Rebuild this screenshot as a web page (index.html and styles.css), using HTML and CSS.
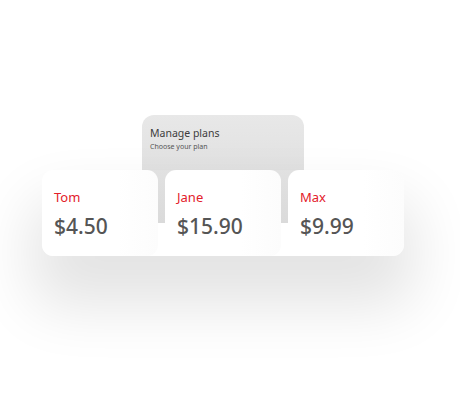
FILE: index.html
```html
<!DOCTYPE html>
<html lang="en">
<head>
    <meta charset="UTF-8">
    <meta name="viewport" content="width=device-width, initial-scale=1.0">
    <title>Manage plans</title>
    <link rel="stylesheet" href="styles.css">
</head>
<body>
    <div class="stage">
        <div class="plans-panel">
            <h3>Manage plans</h3>
            <p>Choose your plan</p>
        </div>
        <div class="plan-row">
            <div class="plan-card">
                <div class="plan-name">Tom</div>
                <div class="plan-price">$4.50</div>
            </div>
            <div class="plan-card">
                <div class="plan-name">Jane</div>
                <div class="plan-price">$15.90</div>
            </div>
            <div class="plan-card">
                <div class="plan-name">Max</div>
                <div class="plan-price">$9.99</div>
            </div>
        </div>
    </div>
</body>
</html>
```

FILE: styles.css
```css
html, body {
    height: 100%;
}
body {
    margin: 0;
    min-height: 400px;
    background: #ffffff;
    font-family: "Noto Sans", Arial, sans-serif;
}
.stage {
    width: 362px;
    margin-left: 42px;
    padding-top: 115px;
}
.plans-panel {
    width: 162px;
    height: 108px;
    margin: 0 auto;
    box-sizing: border-box;
    padding: 11px 8px;
    border-radius: 12px 12px 0 0;
    background: linear-gradient(#e8e8e8, #dadada);
}
.plans-panel h3 {
    margin: 0;
    font-size: 10.5px;
    font-weight: 400;
    color: #3d3d3d;
    line-height: 15px;
}
.plans-panel p {
    margin: 1px 0 0;
    font-size: 7px;
    color: #555;
}
.plan-row {
    display: flex;
    gap: 7px;
    margin-top: -53px;
    border-radius: 12px;
    box-shadow: 0 40px 60px 10px rgba(0, 0, 0, 0.11);
}
.plan-card {
    flex: 1;
    height: 86px;
    box-sizing: border-box;
    padding: 18px 12px;
    border-radius: 11px;
    background: linear-gradient(90deg, #ffffff 65%, #fcfcfc);
}
.plan-name {
    font-size: 13px;
    color: #e3202a;
    line-height: 18px;
}
.plan-price {
    margin-top: 7px;
    font-size: 21px;
    font-weight: 500;
    color: #555555;
    line-height: 26px;
}
```
